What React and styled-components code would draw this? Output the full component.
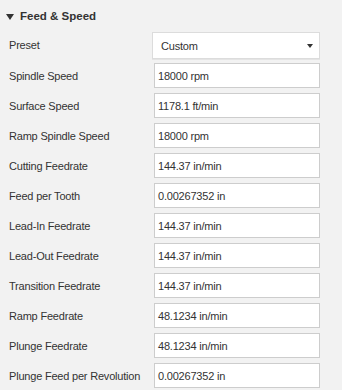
import React from "react";
import styled, { createGlobalStyle } from "styled-components";

const Global = createGlobalStyle`
  html, body { margin: 0; padding: 0; background: #f2f2f2; }
  body { font-family: "Liberation Sans", Arial, sans-serif; }
`;

const Panel = styled.div`
  width: 342px;
  height: 390px;
  background: #f2f2f2;
  color: #333;
  font-size: 11px;
  letter-spacing: -0.2px;
  overflow: hidden;
`;

const Header = styled.div`
  display: flex;
  align-items: center;
  gap: 6px;
  height: 32px;
  padding-left: 6px;
  box-sizing: border-box;
  font-weight: bold;
  font-size: 11.5px;
  letter-spacing: 0;
  color: #333;
`;

const Caret = styled.span`
  width: 0;
  height: 0;
  border-left: 4.5px solid transparent;
  border-right: 4.5px solid transparent;
  border-top: 6px solid #333;
  margin-top: 1px;
`;

const Rows = styled.div`
  display: grid;
  grid-template-columns: 152px 168px;
  row-gap: 5px;
`;

const Label = styled.div`
  padding-left: 9px;
  display: flex;
  align-items: center;
  color: #333;
  white-space: nowrap;
`;

const Select = styled.div`
  height: 27px;
  box-sizing: border-box;
  background: #fff;
  border: 1px solid #dcdcdc;
  box-shadow: 0 1px 0 #e4e4e4;
  display: flex;
  align-items: center;
  justify-content: space-between;
  padding: 0 6px 0 8px;
  margin-bottom: -1px;
  color: #333;
`;

const SmallCaret = styled.span`
  width: 0;
  height: 0;
  border-left: 3.5px solid transparent;
  border-right: 3.5px solid transparent;
  border-top: 4px solid #333;
  margin-top: 1px;
`;

const Input = styled.div`
  margin-left: 2px;
  height: 25px;
  box-sizing: border-box;
  background: #fff;
  border: 1px solid #cdcdcd;
  display: flex;
  align-items: center;
  padding-left: 3px;
  color: #333;
`;

const rows = [
  ["Spindle Speed", "18000 rpm"],
  ["Surface Speed", "1178.1 ft/min"],
  ["Ramp Spindle Speed", "18000 rpm"],
  ["Cutting Feedrate", "144.37 in/min"],
  ["Feed per Tooth", "0.00267352 in"],
  ["Lead-In Feedrate", "144.37 in/min"],
  ["Lead-Out Feedrate", "144.37 in/min"],
  ["Transition Feedrate", "144.37 in/min"],
  ["Ramp Feedrate", "48.1234 in/min"],
  ["Plunge Feedrate", "48.1234 in/min"],
  ["Plunge Feed per Revolution", "0.00267352 in"],
];

export default function App() {
  return (
    <>
      <Global />
      <Panel>
        <Header>
          <Caret />
          <span>Feed &amp; Speed</span>
        </Header>
        <Rows>
          <Label>Preset</Label>
          <Select>
            <span>Custom</span>
            <SmallCaret />
          </Select>
          {rows.map(([l, v]) => (
            <React.Fragment key={l}>
              <Label>{l}</Label>
              <Input>{v}</Input>
            </React.Fragment>
          ))}
        </Rows>
      </Panel>
    </>
  );
}
